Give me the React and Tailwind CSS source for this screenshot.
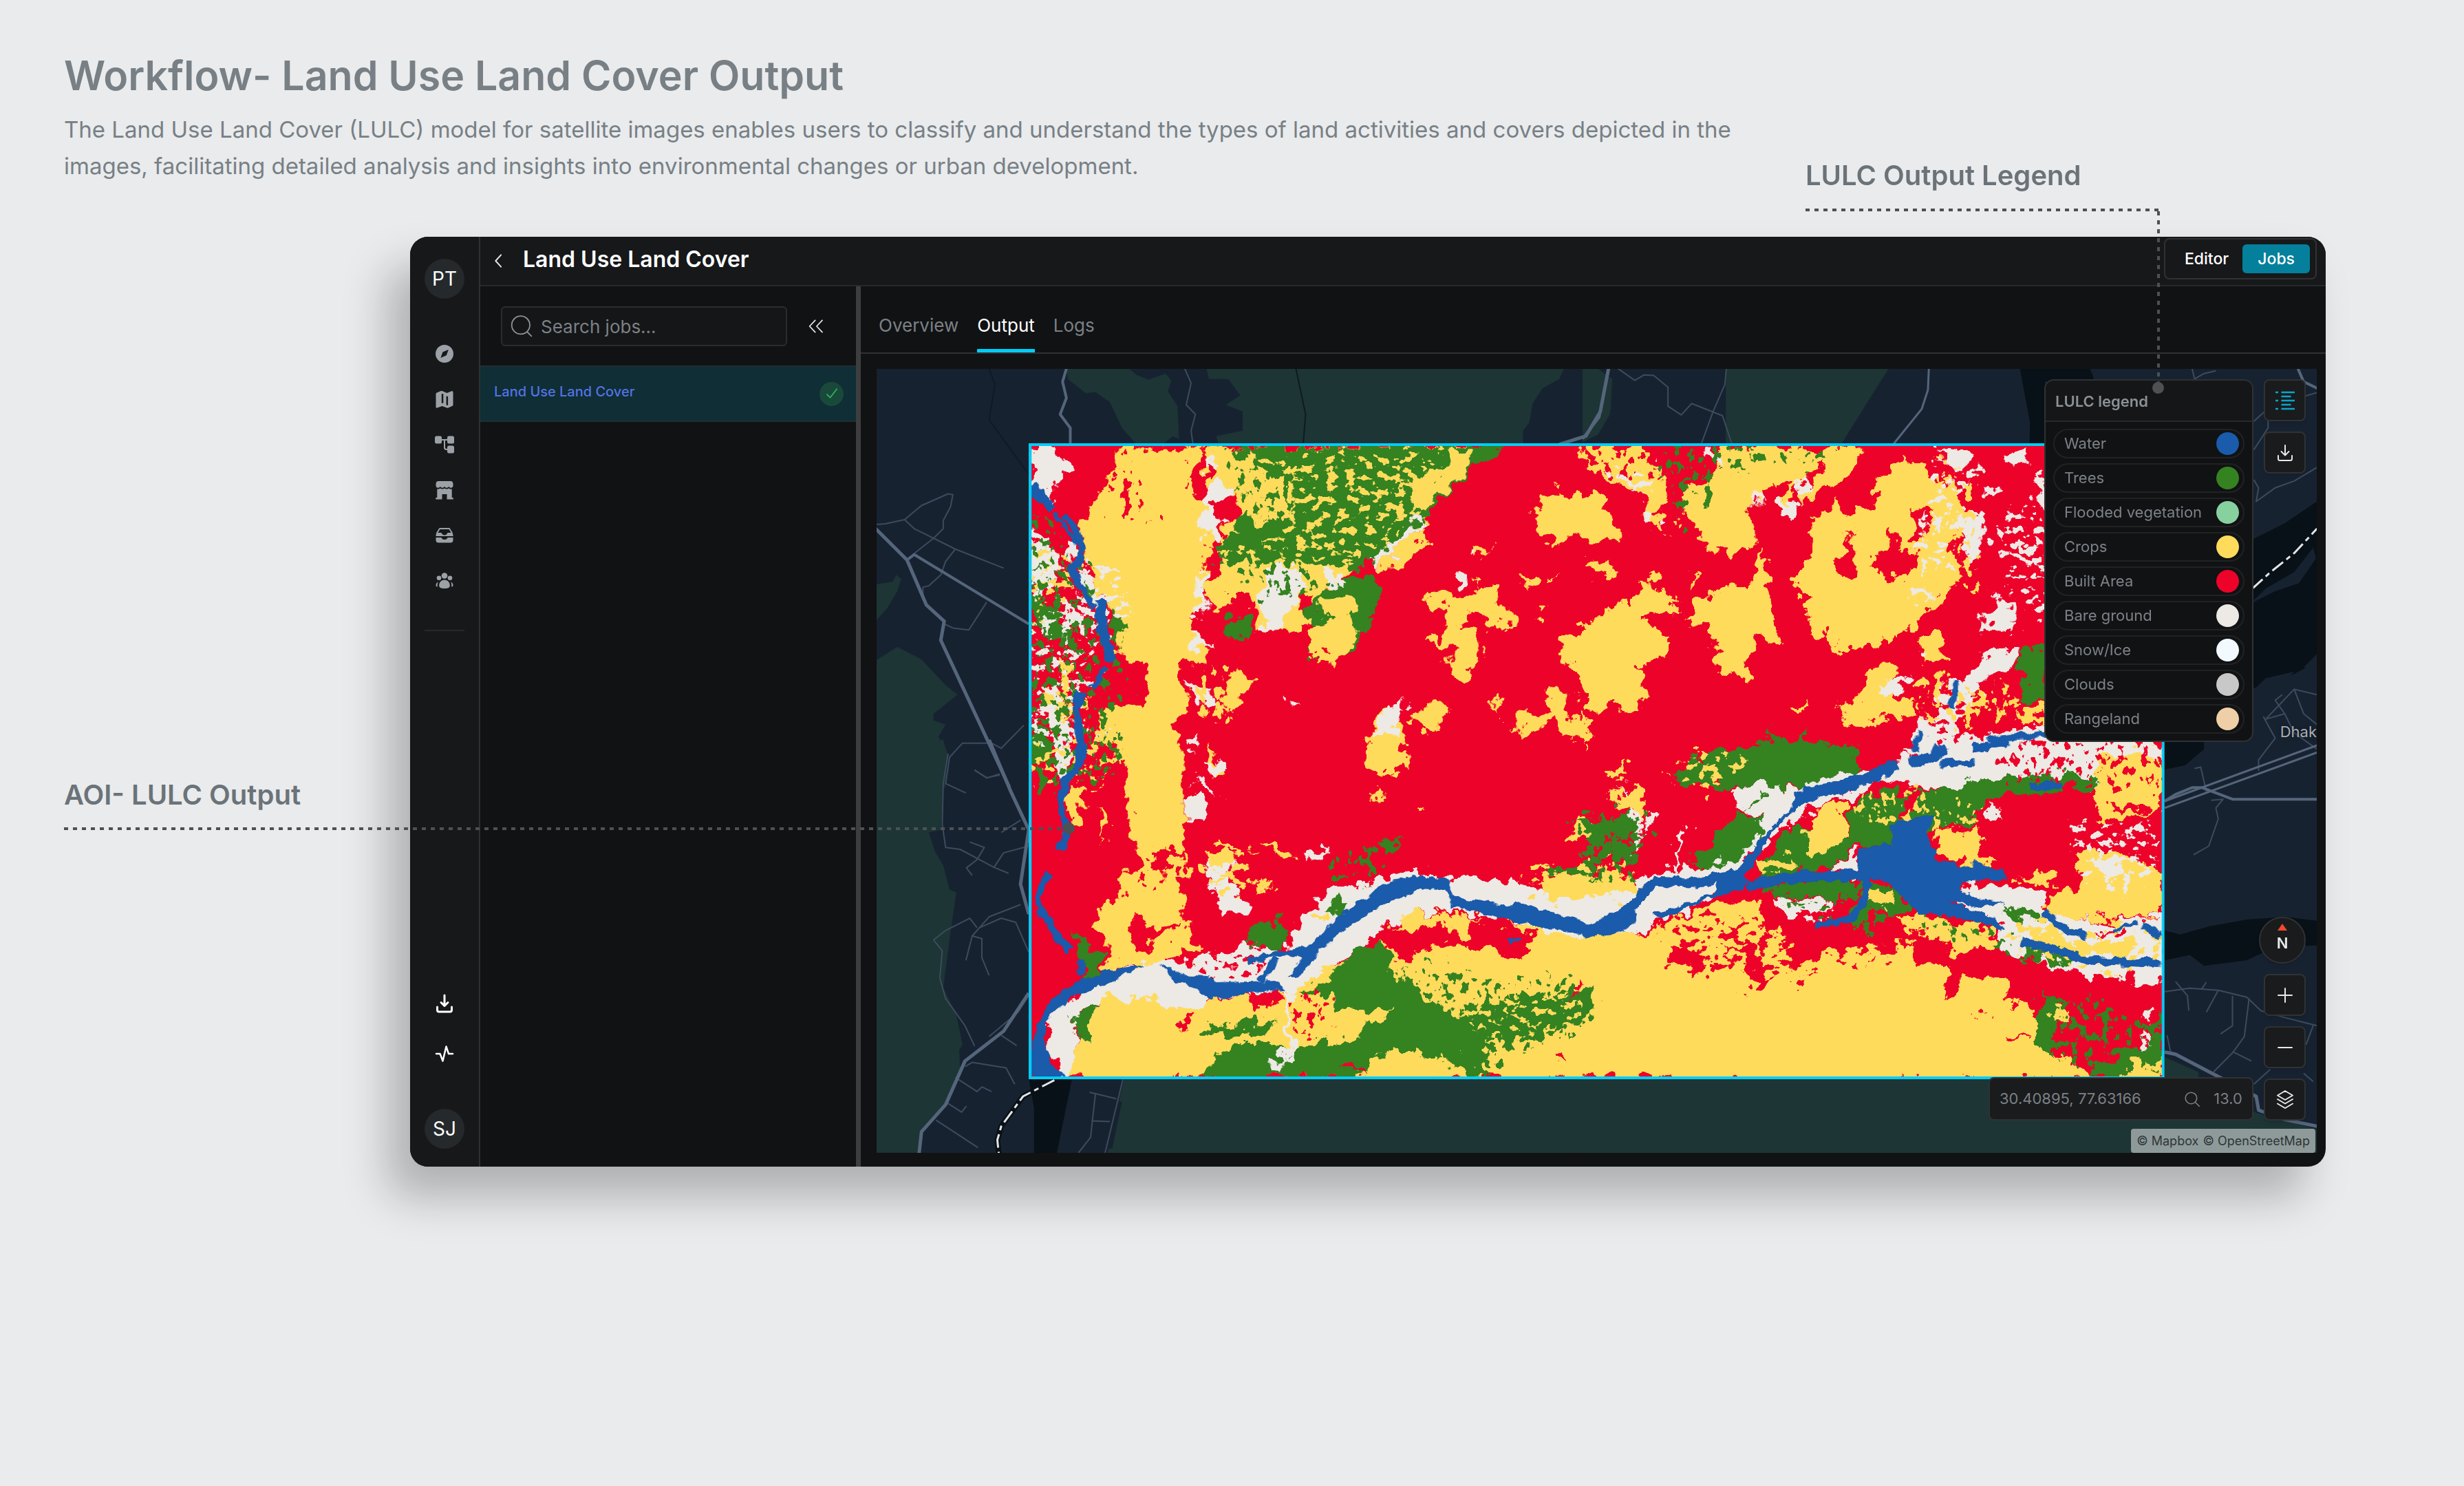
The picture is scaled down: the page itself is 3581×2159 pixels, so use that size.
import React from "react";

const C = {
  water: "#1a5bab",
  trees: "#358221",
  flooded: "#87d19e",
  crops: "#ffdb5c",
  built: "#ed022a",
  bare: "#ede9e4",
  snow: "#f2faff",
  clouds: "#c8c8c8",
  range: "#efcfa8",
};

const LEGEND = [
  ["Water", C.water],
  ["Trees", C.trees],
  ["Flooded vegetation", C.flooded],
  ["Crops", C.crops],
  ["Built Area", C.built],
  ["Bare ground", C.bare],
  ["Snow/Ice", C.snow],
  ["Clouds", C.clouds],
  ["Rangeland", C.range],
];

/* The map is split in four survey tiles; each has its own local grid. */
const TILE = {
  nw: "translate(1270 520) scale(0.7015 0.3954)",
  ne: "translate(2300 520) scale(0.6888 0.3954)",
  sw: "translate(1270 1080) scale(0.7015 0.3954)",
  se: "translate(2300 1080) scale(0.6888 0.3954)",
};

/* Solid land-cover areas, painted in order: tile, class, outline. */
const AREAS = [
  ["nw", "crops", "515,320 690,320 655,450 690,520 700,700 690,760 675,850 670,930 655,1000 690,1060 685,1120 640,1130 645,1250 635,1330 635,1580 525,1580 515,1480 500,1430 460,1400 470,1310 520,1285 570,1270 580,1170 540,1120 505,1080 505,1000 480,880 440,780 428,640 450,540 475,480 490,400"],
  ["sw", "crops", "515,0 635,0 640,200 645,300 645,395 570,400 590,460 640,400 665,470 630,510 640,560 645,660 680,770 600,790 560,825 485,830 480,720 450,660 500,590 515,520 548,440 530,330"],
  ["nw", "crops", "690,320 1240,320 1240,500 1100,650 990,770 940,850 900,1000 850,1010 800,1000 800,900 700,920 680,850 720,750 730,600 740,500 690,480"],
  ["nw", "trees", "750,320 1330,325 1240,440 1150,570 1110,650 1030,770 870,755 720,750 710,700 760,640 750,590 860,600 870,470 860,430 800,420 760,380"],
  ["nw", "crops", "1195,335 1240,345 1230,410 1180,500 1115,580 1110,450 1190,400"],
  ["nw", "built", "1320,325 1465,325 1520,440 1580,520 1580,900 1050,880 1030,800 990,775 1100,760 1150,570 1230,430"],
  ["nw", "trees", "985,800 1040,820 1052,880 1035,940 990,1080 950,1100 900,1100 895,1060 910,1000 900,920 940,850"],
  ["nw", "crops", "930,890 975,885 1000,940 995,1030 965,1110 910,1105 895,1060 910,1000 950,940 920,940"],
  ["nw", "trees", "735,960 775,930 780,1000 758,1035 735,1000"],
  ["nw", "built", "700,540 750,515 755,590 720,610"],
  ["nw", "built", "740,870 775,870 780,920 740,950"],
  ["nw", "built", "880,870 910,875 905,930 880,930"],
  ["nw", "bare", "820,780 870,760 900,830 870,880 850,990 815,1010 810,920 800,870"],
  ["nw", "bare", "925,770 960,790 980,840 930,830"],
  ["nw", "bare", "690,370 710,370 705,420 690,420"],
  ["nw", "bare", "685,500 720,460 745,480 740,510 690,540 725,610 710,670 680,640"],
  ["nw", "bare", "675,790 690,800 680,910 690,940 665,940"],
  ["nw", "bare", "655,1000 680,1040 710,1080 655,1060"],
  ["nw", "crops", "1415,480 1510,530 1550,640 1545,685 1490,670 1450,645 1415,690 1375,650 1365,590 1390,510"],
  ["nw", "crops", "1145,850 1230,880 1255,820 1315,900 1330,1005 1285,990 1235,930 1220,1000 1250,1020 1255,1155 1200,1175 1190,1110 1215,1070 1150,1060 1190,980 1180,920 1145,910"],
  ["nw", "crops", "1535,890 1590,930 1590,1280 1480,1290 1465,1170 1420,1080 1425,1015 1490,1010 1490,970 1520,960"],
  ["nw", "crops", "1400,1210 1445,1235 1440,1300 1485,1370 1475,1430 1420,1360 1400,1335 1350,1410 1325,1370 1345,1300 1400,1300"],
  ["nw", "crops", "1150,1230 1185,1290 1170,1370 1130,1380 1105,1340 1145,1310"],
  ["nw", "crops", "1040,1330 1090,1280 1090,1400 1110,1490 1080,1530 1040,1530 1020,1450"],
  ["nw", "crops", "750,1130 775,1180 765,1300 715,1310 735,1200"],
  ["nw", "crops", "695,1420 740,1540 710,1540 690,1460"],
  ["nw", "crops", "1480,760 1530,740 1530,810 1490,810"],
  ["nw", "crops", "1350,800 1380,820 1362,860"],
  ["nw", "crops", "1245,700 1278,688 1258,740"],
  ["nw", "crops", "1288,1260 1298,1250 1298,1310 1286,1310"],
  ["nw", "crops", "1370,940 1395,940 1385,970"],
  ["nw", "crops", "1400,798 1416,800 1410,825"],
  ["nw", "crops", "1140,610 1148,680 1095,760 1040,772 1090,695"],
  ["nw", "bare", "1130,585 1143,600 1100,680 1040,772 1030,770 1075,690"],
  ["nw", "bare", "655,1190 700,1230 720,1290 670,1270"],
  ["nw", "bare", "1212,760 1242,800 1215,840"],
  ["nw", "bare", "1242,710 1258,715 1245,745"],
  ["nw", "bare", "852,1240 885,1285 855,1290"],
  ["nw", "bare", "1090,1260 1105,1290 1075,1340 1080,1390 1035,1390 1040,1360"],
  ["nw", "bare", "650,1400 675,1380 670,1420 652,1440"],
  ["nw", "bare", "700,1470 735,1500 710,1540"],
  ["nw", "built", "395,325 470,335 480,480 440,600 400,580 372,520 380,440 405,420 380,370"],
  ["nw", "bare", "330,330 380,340 405,420 370,450 376,540 330,470"],
  ["nw", "bare", "326,620 370,690 395,800 350,900 326,900"],
  ["nw", "bare", "400,670 430,700 420,760 395,730"],
  ["nw", "bare", "415,780 445,790 475,900 460,960 440,880"],
  ["nw", "bare", "400,930 440,940 435,1010 410,990"],
  ["nw", "crops", "440,740 480,760 520,900 500,960 460,850"],
  ["nw", "trees", "326,860 370,900 400,980 410,1060 380,1040 326,970"],
  ["nw", "trees", "490,920 515,950 505,1050 490,1040"],
  ["nw", "bare", "345,1280 400,1310 410,1420 405,1560 375,1560 385,1400 350,1330"],
  ["nw", "crops", "345,1240 400,1240 410,1330 360,1290"],
  ["nw", "trees", "326,1340 360,1370 370,1480 326,1500"],
  ["nw", "crops", "390,1110 412,1140 410,1220 390,1240"],
  ["sw", "bare", "380,0 405,0 400,120 375,100"],
  ["sw", "crops", "400,170 435,190 430,290 405,310"],
  ["sw", "crops", "470,230 495,300 475,350"],
  ["ne", "crops", "0,325 125,330 130,390 175,450 180,530 160,560 180,650 150,640 120,580 130,540 70,440 0,400"],
  ["ne", "crops", "0,515 40,520 80,640 80,685 0,655"],
  ["ne", "crops", "280,325 590,335 570,430 500,490 430,580 410,540 450,460 400,455 360,560 365,690 270,720 250,640 210,610 215,520 240,460 280,440"],
  ["ne", "crops", "680,370 740,430 790,480 800,600 780,700 800,800 750,900 700,960 690,1030 620,1050 580,1080 520,1060 470,960 470,870 435,800 490,740 470,620 540,520 560,580 610,570 620,450 650,410"],
  ["ne", "built", "700,560 735,560 720,670 700,670"],
  ["ne", "built", "655,610 670,700 710,720 715,790 650,815 605,790 610,740 635,720"],
  ["ne", "built", "560,640 575,690 575,790 550,820 530,760 560,700"],
  ["ne", "built", "490,400 510,400 440,580 420,570"],
  ["ne", "crops", "130,800 195,880 205,945 150,930 140,980 180,1020 180,1090 130,1130 85,1140 85,1280 30,1290 0,1230 0,980 40,970 50,920 100,920"],
  ["ne", "crops", "375,710 400,820 380,900 420,1000 410,1060 365,1010 350,1180 280,1170 275,1010 215,970 240,890 350,840"],
  ["ne", "crops", "0,1290 15,1340 12,1420 0,1440"],
  ["ne", "crops", "600,1150 650,1110 665,1160 640,1230 700,1270 720,1310 560,1350 530,1280 590,1270"],
  ["ne", "crops", "710,1030 760,1020 770,1120 720,1130 705,1080"],
  ["ne", "crops", "10,750 60,745 65,800 15,790"],
  ["ne", "crops", "435,1285 480,1285 470,1300 435,1300"],
  ["ne", "crops", "225,790 240,800 235,840"],
  ["ne", "bare", "265,335 290,340 290,380 270,370"],
  ["ne", "bare", "365,490 380,500 370,550"],
  ["ne", "bare", "415,520 450,540 435,590 415,560"],
  ["ne", "bare", "450,450 480,480 470,510"],
  ["ne", "bare", "745,330 825,340 820,390 780,420 775,370"],
  ["ne", "bare", "890,340 935,340 930,390 900,400"],
  ["ne", "bare", "845,480 870,460 885,500 850,500"],
  ["ne", "bare", "790,580 820,550 855,610 835,750 800,740"],
  ["ne", "bare", "740,580 765,600 760,640 745,640"],
  ["ne", "bare", "870,880 905,900 905,990 840,1020 850,960"],
  ["ne", "bare", "920,680 965,700 960,740 925,720"],
  ["ne", "bare", "885,1065 920,1080 910,1140 850,1180 830,1270 800,1320 785,1440 740,1490 690,1470 700,1380 740,1290 760,1190 790,1200 850,1100"],
  ["ne", "bare", "958,430 975,430 980,600 960,540"],
  ["ne", "bare", "625,1200 690,1180 660,1240 630,1240"],
  ["ne", "bare", "700,1060 725,1070 720,1100 702,1100"],
  ["ne", "trees", "920,1090 985,1060 985,1280 930,1260"],
  ["ne", "crops", "890,1270 985,1290 985,1350 920,1330"],
  ["ne", "crops", "830,1240 870,1250 850,1300 800,1310"],
  ["ne", "bare", "780,1400 860,1385 985,1345 1235,1400 1235,1580 640,1580 690,1490"],
  ["ne", "trees", "320,1440 385,1440 395,1370 410,1430 455,1430 465,1350 480,1430 575,1440 580,1520 550,1580 190,1570 240,1500"],
  ["se", "trees", "240,50 330,20 400,0 560,0 580,60 570,110 500,155 440,160 300,135 190,140"],
  ["se", "bare", "640,90 860,0 1230,0 1220,60 1080,100 1050,130 1000,150 900,160 700,155 640,140 600,150 560,210 470,250 440,290 380,370 340,440 310,530 180,650 110,700 0,700 0,580 100,540 180,470 240,470 330,420 380,270 320,250 320,170 380,140 440,170 560,110"],
  ["se", "built", "600,160 690,150 720,175 600,190 540,310 540,260"],
  ["se", "trees", "320,270 378,270 370,350 330,420 250,475 220,430 270,370"],
  ["se", "trees", "600,190 700,180 860,130 1080,110 1085,150 1000,240 900,190 830,230 850,320 780,300 740,330 640,400 580,380 500,460 360,500 420,370 440,300 560,330 570,240"],
  ["se", "built", "675,195 700,190 695,270 675,260"],
  ["se", "crops", "500,240 560,230 560,320 520,400 470,405 480,290"],
  ["se", "crops", "370,430 440,420 450,460 380,470"],
  ["se", "bare", "520,440 575,400 580,480 510,475"],
  ["se", "trees", "340,250 375,190 380,215 345,225"],
  ["se", "built", "830,230 900,200 1080,160 1100,300 1180,280 1210,350 1180,440 1050,370 1030,430 1050,540 960,560 880,490 840,400"],
  ["se", "crops", "1090,70 1180,25 1230,40 1230,240 1100,300 1080,200"],
  ["se", "built", "1120,230 1200,240 1180,260 1120,250"],
  ["se", "crops", "745,330 830,330 840,400 865,470 800,450 745,390"],
  ["se", "crops", "980,560 1050,530 1040,400 1100,380 1180,440 1230,480 1230,630 1100,650 1000,640"],
  ["se", "crops", "920,480 1005,480 990,530 920,510"],
  ["se", "bare", "1080,430 1150,430 1130,500 1090,490"],
  ["se", "bare", "845,230 880,250 880,290 850,270"],
  ["se", "crops", "0,480 50,460 80,510 0,560"],
  ["se", "crops", "60,190 100,190 105,260 60,240"],
  ["se", "crops", "60,90 95,80 85,120 65,120"],
  ["se", "bare", "85,150 105,200 125,270 120,410 105,350 110,260"],
  ["se", "bare", "130,240 155,280 130,320"],
  ["se", "bare", "215,300 235,310 205,370 190,470 180,470 200,350"],
  ["se", "trees", "40,390 80,360 110,420 60,430"],
  ["se", "trees", "0,310 60,290 60,360 0,370"],
  ["se", "crops", "0,725 60,715 180,680 200,640 360,565 385,620 400,690 430,740 500,790 600,730 700,740 770,840 830,840 890,870 900,960 960,960 960,1100 1060,1200 1080,1240 0,1240"],
  ["se", "built", "180,750 270,780 260,850 185,810"],
  ["se", "built", "365,740 385,830 380,890 365,890 355,790 300,770"],
  ["se", "built", "430,640 590,650 600,720 540,750 500,790 415,830 440,760 400,690"],
  ["se", "built", "620,690 660,640 665,740 615,770"],
  ["se", "trees", "380,520 480,500 590,505 570,570 400,560"],
  ["se", "bare", "400,570 520,570 530,630 420,650"],
  ["se", "trees", "560,650 600,510 660,520 690,600 640,640 610,710"],
  ["se", "crops", "610,550 655,545 650,600 610,590"],
  ["se", "crops", "660,640 720,640 870,690 870,775 790,770 700,710"],
  ["se", "built", "700,700 760,720 780,770 870,760 920,800 1110,870 1220,880 1230,1090 1100,1180 980,1120 1000,1040 900,945 890,850 800,870 800,920 770,920 770,820 710,810"],
  ["se", "bare", "780,570 830,510 960,550 990,630 1110,660 1230,630 1230,890 1080,850 1020,840 930,790 870,760 880,680"],
  ["se", "crops", "950,680 1040,720 1110,750 1060,790 930,720"],
  ["se", "trees", "940,740 1040,770 1040,820 930,800"],
  ["se", "trees", "890,600 960,620 970,650 900,640"],
  ["se", "crops", "1080,730 1170,740 1160,780 1080,770"],
  ["se", "built", "1080,700 1140,680 1150,700 1080,710"],
  ["se", "trees", "960,935 1025,940 1000,1010 985,1110 1010,1170 960,1110"],
  ["se", "trees", "1080,1180 1200,1090 1230,1050 1230,1180 1150,1180 1140,1240 1075,1240"],
  ["se", "trees", "1030,1010 1060,1060 1050,1090 1030,1070"],
  ["se", "crops", "990,980 1020,970 1025,1010 990,1010"],
  ["se", "crops", "1150,1180 1230,1170 1230,1240 1140,1240"],
  ["se", "bare", "1175,1070 1200,1100 1185,1120"],
  ["se", "bare", "1185,1000 1200,970 1200,1040"],
  ["se", "built", "835,970 845,1020 830,1010"],
  ["se", "built", "890,1050 940,1090 900,1080"],
  ["sw", "crops", "410,1240 450,1000 470,930 580,920 640,990 690,950 850,920 880,860 1060,740 1080,625 1230,640 1400,680 1480,700 1590,700 1590,1240"],
  ["sw", "built", "1060,690 1280,645 1370,700 1340,770 1170,740 1100,810 1060,760"],
  ["sw", "crops", "1195,640 1240,640 1230,720 1200,710"],
  ["sw", "bare", "350,1100 365,980 440,900 560,812 600,790 650,825 690,780 760,755 865,755 875,670 940,540 1050,505 1100,480 1190,495 1300,505 1400,550 1580,540 1580,660 1490,720 1390,690 1300,645 1200,625 1080,635 1050,700 985,775 920,850 870,915 700,940 680,965 640,990 590,940 480,935 420,990 412,1060 430,1110 415,1240 380,1240"],
  ["sw", "crops", "1370,500 1580,480 1580,550 1400,580"],
  ["sw", "trees", "885,920 950,860 1000,745 1050,750 1090,860 1150,950 1210,1000 1300,940 1490,900 1505,960 1440,1050 1380,1090 1280,1120 1260,1240 1200,1180 1120,1130 1030,1150 1000,1240 680,1240 690,1170 760,1110 870,1110 1000,1090 1020,1030 1080,990 960,980 940,930"],
  ["sw", "crops", "1030,1150 1100,1130 1210,1160 1200,1215 1030,1215"],
  ["sw", "trees", "675,1045 830,1020 830,1060 680,1075"],
  ["sw", "trees", "765,750 790,670 855,640 860,720 830,755"],
  ["sw", "trees", "415,1000 460,950 455,1060 430,1105 415,1060"],
  ["sw", "trees", "940,590 990,590 960,640"],
  ["sw", "crops", "910,620 950,615 945,650 910,650"],
  ["sw", "trees", "410,690 470,770 480,860 435,870 430,790"],
  ["sw", "trees", "1050,360 1090,365 1070,385 1045,380"],
  ["sw", "trees", "1020,420 1045,450 1040,500 1020,480"],
  ["sw", "bare", "845,890 865,930 877,1110 840,1160 842,1220 828,1220 830,1160 862,1090 855,940"],
  ["sw", "bare", "690,420 750,390 745,500 770,600 720,640 710,540 690,520"],
  ["sw", "crops", "700,400 755,395 750,450 700,460"],
  ["sw", "crops", "800,370 870,390 880,440 850,450 830,400 800,390"],
  ["sw", "crops", "800,490 825,540 800,570 790,520"],
  ["sw", "bare", "890,400 935,400 920,440 895,430"],
  ["sw", "crops", "1035,190 1050,150 1065,220 1045,225"],
  ["sw", "crops", "1110,250 1150,220 1125,270"],
  ["sw", "crops", "1020,30 1050,-20 1110,60 1085,110 1030,100"],
  ["sw", "crops", "1520,200 1590,160 1590,270"],
  ["sw", "crops", "1535,90 1560,80 1550,140 1530,120"],
  ["sw", "bare", "640,200 685,200 690,285 645,275"],
  ["sw", "bare", "660,150 690,145 720,200 690,170"],
  ["sw", "bare", "685,70 720,60 735,110 700,110"],
  ["sw", "crops", "1440,330 1475,260 1500,330 1440,370"],
  ["sw", "trees", "1460,290 1580,270 1580,330 1480,360"],
  ["sw", "trees", "1530,370 1580,370 1580,440 1540,420"],
  ["sw", "trees", "1390,450 1480,450 1490,500 1400,480"],
  ["sw", "built", "525,700 545,640 580,680 640,660 560,770"],
  ["sw", "built", "570,400 640,400 600,470"],
  ["sw", "built", "780,910 850,930 790,1010"],
  ["sw", "built", "1440,880 1465,880 1445,970"],
  ["sw", "built", "625,1030 660,1010 640,1060"],
  ["sw", "built", "960,1190 990,1170 1020,1210"],
  ["sw", "built", "1405,1150 1430,1130 1435,1170"],
];

/* Areas where two classes mix cell by cell. */
const MIXED = [
  ["nw", "crops", "760,380 1110,340 1200,400 1120,620 1000,740 720,760 720,680 870,620"],
  ["nw", "trees", "740,340 880,360 870,620 740,640 700,760 820,880 960,840 900,760 760,600"],
  ["nw", "crops", "326,700 420,720 440,1100 470,1300 440,1560 326,1560"],
  ["nw", "trees", "326,560 360,600 440,760 440,960 520,980 500,1500 410,1560 326,1500"],
  ["nw", "bare", "430,740 520,780 540,900 470,1050 440,1300 500,1400 470,1560 326,1560 326,1000 400,900"],
  ["nw", "built", "480,340 530,400 560,600 600,640 590,600 520,600 480,500"],
  ["nw", "built", "650,360 690,380 690,520 650,480"],
  ["nw", "crops", "660,1130 770,1130 750,1320 660,1300"],
  ["ne", "bare", "60,400 160,400 160,640 120,580"],
  ["ne", "built", "0,330 290,330 280,460 180,460 0,420"],
  ["ne", "bare", "740,340 820,420 800,620 740,900 700,900"],
  ["ne", "trees", "190,330 540,330 520,400 290,400 200,620 190,520"],
  ["ne", "bare", "880,560 980,560 980,1000 880,860"],
  ["ne", "crops", "740,380 820,420 820,860 760,860"],
  ["ne", "built", "720,1240 980,1240 980,1360 740,1400"],
  ["ne", "crops", "690,1200 900,1220 880,1340 700,1340"],
  ["ne", "crops", "200,1450 340,1430 320,1568 190,1568"],
  ["ne", "built", "900,1440 1220,1400 1220,1568 960,1568"],
  ["se", "crops", "200,60 320,20 260,180 220,200"],
  ["se", "built", "870,50 1200,0 1100,120 900,150"],
  ["se", "trees", "0,260 140,280 100,440 0,480"],
  ["se", "crops", "560,180 740,160 760,280 600,300"],
  ["se", "trees", "390,520 570,500 560,640 400,600"],
  ["se", "crops", "740,240 840,240 840,320 740,320"],
  ["se", "built", "200,640 680,640 720,760 520,840 380,900 180,820"],
  ["se", "trees", "700,620 880,660 940,800 860,740 720,680"],
  ["se", "crops", "900,620 1220,680 1220,840 1040,820 920,760"],
  ["se", "trees", "960,940 1080,960 1220,1000 1220,1220 1060,1200 960,1100"],
  ["se", "bare", "1030,300 1220,300 1200,540 1060,520"],
  ["sw", "trees", "326,0 520,0 500,140 326,160"],
  ["sw", "crops", "326,0 500,0 480,160 326,130"],
  ["sw", "built", "560,420 660,400 640,500 560,500"],
  ["sw", "built", "680,760 860,760 800,830 640,850"],
  ["sw", "trees", "1080,820 1460,860 1480,1020 1260,1220 1100,1140"],
  ["sw", "crops", "1240,900 1480,900 1460,1040 1340,1200 1260,1160"],
  ["sw", "built", "880,900 960,960 920,1080 860,1060"],
  ["sw", "crops", "1340,440 1568,440 1568,540 1340,560"],
  ["sw", "trees", "1440,280 1568,260 1568,480 1480,480"],
  ["sw", "crops", "680,380 800,380 760,560 680,540"],
  ["sw", "trees", "930,440 1060,360 1040,500 960,500"],
];

const WATER_AREAS = [
  ["sw", "322,1232 400,1232 365,1170 355,1090 365,1000 410,935 480,890 560,820 490,835 420,880 370,940 340,1040 326,1130"],
  ["sw", "595,812 640,850 695,855 705,880 840,875 850,910 770,920 755,935 690,945 670,900 625,880"],
  ["sw", "770,800 840,765 895,755 950,660 1000,590 1060,520 1120,486 1190,505 1200,560 1300,595 1340,590 1420,630 1490,670 1525,625 1580,590 1580,660 1530,710 1490,708 1380,680 1200,605 1185,540 1140,535 1050,600 980,680 920,770 880,870 860,865 885,785 830,785 780,815"],
  ["se", "650,300 740,260 725,330 750,430 800,450 860,475 890,470 880,495 800,510 790,545 850,580 890,590 840,605 770,580 810,605 870,640 890,690 780,635 710,630 670,560 640,510 580,490 580,390 650,370"],
  ["se", "450,175 500,170 510,190 450,240 400,330 360,450 345,490 340,540 290,560 160,650 150,630 270,560 290,490 330,460 360,380 440,240"],
  ["ne", "850,1395 985,1370 985,1395 880,1412 860,1430"],
  ["sw", "1310,715 1345,715 1340,735 1315,735"],
];

/* tile, stroke width, course */
const STREAMS = [
  ["nw", 14, "326,465 350,520 372,560"],
  ["nw", 6, "378,575 405,650 425,690"],
  ["nw", 10, "395,575 420,640 432,700 428,750 410,780 432,850 455,920"],
  ["nw", 14, "472,890 472,1000 490,1070 490,1120"],
  ["nw", 8, "478,1140 465,1190 450,1215"],
  ["nw", 12, "432,1230 420,1290 425,1370 434,1450 420,1510 395,1568"],
  ["sw", 11, "430,-10 424,80 398,150 388,200 392,260 402,320 385,400"],
  ["sw", 10, "362,480 345,540 340,600"],
  ["sw", 11, "340,600 365,660 385,720 408,760"],
  ["sw", 8, "432,795 428,860"],
  ["sw", 9, "835,790 815,840 800,875"],
  ["ne", 9, "790,1190 785,1240 775,1290"],
  ["ne", 16, "765,1430 740,1470 690,1490"],
  ["ne", 8, "712,1370 700,1450"],
  ["se", 15, "755,10 740,55 690,70"],
  ["se", 18, "665,80 600,130 540,165 470,185"],
  ["se", 10, "820,20 900,0"],
  ["se", 10, "755,78 825,72"],
  ["se", 10, "945,165 1010,155"],
  ["se", 14, "320,480 240,515 150,510 110,590 60,680 0,705"],
  ["se", 16, "345,530 420,500 500,490 600,490"],
  ["se", 10, "600,510 592,590 560,650 490,675"],
  ["se", 12, "970,620 1010,680 1060,712"],
  ["se", 12, "925,730 1000,760 1060,800 1220,812"],
  ["se", 6, "1120,690 1170,660"],
  ["se", 10, "1180,670 1220,715"],
  ["se", 16, "820,450 860,485 890,480"],
];

const LAND = [
  ["nw", "400,42 530,42 545,65 570,82 605,60 617,85 610,125 630,180 633,300 620,290 600,320 545,320 515,260 490,165 460,128 440,132 403,80"],
  ["nw", "690,42 1430,42 1420,80 1385,115 1365,170 1358,240 1345,270 1345,320 715,320 710,290 765,270 765,200 730,175 760,140 735,80 695,80"],
  ["nw", "1500,42 1530,80 1525,210 1500,285 1470,310 1495,180"],
  ["nw", "5,835 40,825 48,800 58,815 50,860 30,920 5,970"],
  ["nw", "5,1115 50,1065 100,1110 150,1205 175,1240 125,1310 125,1335 150,1350 135,1395 153,1450 150,1580 5,1580"],
  ["sw", "5,-10 145,-10 155,50 145,150 140,320 115,330 128,400 145,450 158,540 172,550 160,700 145,900 172,1000 185,1110 178,1130 180,1200 150,1330 100,1430 95,1507 5,1507"],
  ["sw", "435,1230 1590,1230 1590,1510 485,1510 520,1230"],
  ["ne", "302,42 645,42 545,320 302,320"],
  ["ne", "0,42 30,42 60,80 60,190 30,280 0,315"],
  ["se", "-20,1230 1227,1230 1227,1155 1298,1210 1298,1240 1420,1360 1548,1420 1548,1510 -20,1510"],
];

const NAVY = [["sw", "415,1230 450,1290 515,1320 495,1490 425,1510 380,1510"]];

const DEEP = [
  ["sw", "322,1230 412,1230 380,1510 333,1510 333,1345"],
  ["ne", "922,42 1070,42 1080,90 975,90 975,320 942,320 943,240"],
  ["ne", "1400,680 1480,610 1548,530 1548,1120 1460,1200 1400,1220"],
  ["ne", "1227,1410 1310,1410 1310,1440 1270,1500 1227,1515"],
  ["se", "1227,690 1260,705 1320,675 1400,650 1480,640 1550,655 1550,745 1460,750 1400,800 1310,820 1280,780 1227,800"],
];

const ISLANDS = [
  ["ne", "1405,910 1440,850 1500,790 1540,700 1546,740 1510,830 1460,860 1425,890"],
  ["ne", "1410,1230 1440,1180 1500,1155 1480,1200 1430,1240"],
  ["ne", "1520,1140 1548,1090 1548,1150"],
];

const MAJOR = [
  ["nw", 5, "5,630 70,745 110,910 147,970 140,1040 240,1420 282,1580"],
  ["nw", 4, "70,745 85,725 322,980"],
  ["nw", 4, "400,42 392,90 400,150 387,210 408,260 408,320"],
  ["nw", 5, "1522,42 1505,200 1475,290 1420,320"],
  ["sw", 5, "240,-10 285,180 322,320 305,520 322,630"],
  ["sw", 5, "322,920 270,1060 190,1170 150,1330 100,1430 95,1510"],
  ["ne", 3, "730,42 728,120 715,190 655,320"],
  ["ne", 4, "1508,42 1520,90 1550,115"],
  ["ne", 4, "55,42 35,220 0,300"],
  ["se", 4, "1227,215 1250,190 1285,165 1305,165 1370,208 1550,208"],
  ["se", 3, "1227,240 1550,35"],
  ["se", 3, "1227,215 1548,10"],
  ["se", 5, "1227,1137 1250,1145 1420,1300 1425,1350 1480,1385 1550,1410"],
];

const MINOR = [
  ["nw", "645,42 658,95 648,175 667,210 658,270 662,320"],
  ["nw", "5,615 25,612 65,597 100,545 155,502 165,505 160,550 145,600 145,630 125,665 82,725"],
  ["nw", "65,597 85,630 170,705 270,775"],
  ["nw", "170,705 150,750 140,800 115,840 103,845 103,880"],
  ["nw", "235,900 198,1002 165,995 147,980"],
  ["nw", "312,1352 265,1437 245,1418 185,1418 158,1470 150,1568"],
  ["nw", "210,1518 235,1545 262,1535"],
  ["sw", "155,40 145,150 143,300 150,385 180,392 250,458 270,405 322,380"],
  ["sw", "200,365 230,385 215,430 193,460 205,488"],
  ["sw", "250,458 280,480"],
  ["sw", "265,330 305,285"],
  ["sw", "210,100 235,130 262,115"],
  ["sw", "150,150 192,185"],
  ["sw", "305,595 240,640 205,710 192,800"],
  ["sw", "205,710 225,720 225,790 240,855"],
  ["sw", "215,680 200,645 150,690 125,725 143,765 138,865 150,940 190,1040 210,1115"],
  ["sw", "220,680 265,645 295,660 322,770"],
  ["sw", "322,930 300,990 240,1080"],
  ["sw", "265,1075 297,1113"],
  ["sw", "190,1190 205,1175 275,1195 293,1255"],
  ["sw", "170,1230 215,1282 225,1265 245,1282"],
  ["sw", "150,1320 183,1358 193,1335"],
  ["sw", "130,1387 217,1488"],
  ["sw", "517,1236 480,1507"],
  ["sw", "448,1285 503,1308"],
  ["sw", "460,1290 450,1450 425,1507"],
  ["sw", "452,1390 490,1392"],
  ["ne", "75,42 110,85 130,65 150,67 180,110 180,180 208,212 230,170 295,215 315,320"],
  ["ne", "303,42 300,100 275,200 250,320"],
  ["ne", "1285,42 1290,80 1310,60 1335,50"],
  ["ne", "1415,235 1450,180 1548,130"],
  ["ne", "1415,340 1445,260 1445,230"],
  ["ne", "1415,450 1425,480 1420,530 1460,480 1500,455 1548,405"],
  ["ne", "1440,1330 1500,1220 1548,1240"],
  ["ne", "1435,1320 1460,1400 1425,1480 1425,1520"],
  ["ne", "1500,1220 1520,1310 1548,1350"],
  ["ne", "1440,1330 1480,1310 1500,1380 1548,1440"],
  ["ne", "1480,1310 1460,1260 1475,1240"],
  ["se", "1290,95 1303,90 1315,180"],
  ["se", "1325,212 1350,208 1335,240 1340,280 1320,380 1288,412"],
  ["se", "1227,915 1280,902 1340,910 1400,935 1430,985 1480,1010 1548,1040"],
  ["se", "1250,878 1275,930 1278,985"],
  ["se", "1305,905 1315,880"],
  ["se", "1340,910 1315,990"],
  ["se", "1370,930 1370,1040 1345,1070"],
  ["se", "1405,940 1395,1080 1370,1140 1330,1210"],
  ["se", "1370,1135 1410,1170"],
  ["se", "1232,1075 1240,1140"],
  ["se", "1415,1255 1450,1200"],
  ["se", "1520,1215 1540,1245"],
  ["se", "1540,1040 1525,1110"],
];

const BORDERS = [
  ["nw", "240,42 252,100 240,230 322,430"],
  ["nw", "875,42 895,210 890,320"],
];

const RAILS = [
  ["sw", "375,1240 310,1300 265,1410 257,1460 260,1510"],
  ["ne", "1412,850 1450,790 1500,720 1548,630"],
];

function Poly({ tile, points, fill }) {
  return <polygon transform={TILE[tile]} points={points} fill={fill} />;
}

function Line({ tile, points, stroke, width, dash }) {
  return (
    <polyline
      transform={TILE[tile]}
      points={points}
      fill="none"
      stroke={stroke}
      strokeWidth={width}
      strokeDasharray={dash}
      strokeLinejoin="round"
      vectorEffect="non-scaling-stroke"
    />
  );
}

function CoverMap() {
  return (
    <svg
      viewBox="1275 537 2091 1139"
      preserveAspectRatio="none"
      className="absolute inset-0 size-full"
      role="img"
      aria-label="Land cover map"
    >
      <defs>
        <clipPath id="aoi">
          <rect x="1498" y="648" width="1645" height="919" />
        </clipPath>
        <filter id="ragged" filterUnits="userSpaceOnUse" x="1440" y="600" width="1760" height="1020" colorInterpolationFilters="sRGB">
          <feTurbulence type="fractalNoise" baseFrequency="0.045" numOctaves="4" seed="4" />
          <feDisplacementMap in="SourceGraphic" scale="42" xChannelSelector="R" yChannelSelector="G" />
        </filter>
        <filter id="mixed" filterUnits="userSpaceOnUse" x="1440" y="600" width="1760" height="1020" colorInterpolationFilters="sRGB">
          <feTurbulence type="fractalNoise" baseFrequency="0.07 0.09" numOctaves="3" seed="11" result="n" />
          <feColorMatrix in="n" values="0 0 0 0 0  0 0 0 0 0  0 0 0 0 0  26 0 0 0 -14.6" result="m" />
          <feTurbulence type="fractalNoise" baseFrequency="0.03" numOctaves="3" seed="7" result="d" />
          <feDisplacementMap in="SourceGraphic" in2="d" scale="70" xChannelSelector="R" yChannelSelector="G" result="s" />
          <feComposite in="s" in2="m" operator="in" />
        </filter>
        <filter id="mixedAlt" filterUnits="userSpaceOnUse" x="1440" y="600" width="1760" height="1020" colorInterpolationFilters="sRGB">
          <feTurbulence type="fractalNoise" baseFrequency="0.09 0.07" numOctaves="3" seed="23" result="n" />
          <feColorMatrix in="n" values="0 0 0 0 0  0 0 0 0 0  0 0 0 0 0  0 26 0 0 -14.8" result="m" />
          <feTurbulence type="fractalNoise" baseFrequency="0.03" numOctaves="3" seed="9" result="d" />
          <feDisplacementMap in="SourceGraphic" in2="d" scale="70" xChannelSelector="R" yChannelSelector="G" result="s" />
          <feComposite in="s" in2="m" operator="in" />
        </filter>
        <filter id="banks" filterUnits="userSpaceOnUse" x="1440" y="600" width="1760" height="1020" colorInterpolationFilters="sRGB">
          <feTurbulence type="fractalNoise" baseFrequency="0.07" numOctaves="3" seed="2" />
          <feDisplacementMap in="SourceGraphic" scale="12" xChannelSelector="R" yChannelSelector="G" />
        </filter>
      </defs>

      <rect x="1275" y="537" width="2091" height="1139" fill="#172231" />
      {LAND.map(([t, p], i) => <Poly key={i} tile={t} points={p} fill="#1d3535" />)}
      {NAVY.map(([t, p], i) => <Poly key={i} tile={t} points={p} fill="#172231" />)}
      {DEEP.map(([t, p], i) => <Poly key={i} tile={t} points={p} fill="#081117" />)}
      {ISLANDS.map(([t, p], i) => <Poly key={i} tile={t} points={p} fill="#172231" />)}
      {BORDERS.map(([t, p], i) => <Line key={i} tile={t} points={p} stroke="#0e1b22" width={2} />)}
      {MINOR.map(([t, p], i) => <Line key={i} tile={t} points={p} stroke="#3c4b5d" width={2} />)}
      {MAJOR.map(([t, w, p], i) => <Line key={i} tile={t} points={p} stroke="#55657b" width={w} />)}
      {RAILS.map(([t, p], i) => <Line key={i} tile={t} points={p} stroke="#081117" width={8} />)}
      {RAILS.map(([t, p], i) => <Line key={i} tile={t} points={p} stroke="#e5e5e5" width={3} dash="20 6 7 6" />)}

      <g clipPath="url(#aoi)">
        <rect x="1496" y="645" width="1649" height="924" fill={C.built} />
        <g filter="url(#ragged)">
          {AREAS.map(([t, c, p], i) => <Poly key={i} tile={t} points={p} fill={C[c]} />)}
        </g>
        <g filter="url(#mixed)">
          {MIXED.filter((_, i) => i % 2 === 0).map(([t, c, p], i) => <Poly key={i} tile={t} points={p} fill={C[c]} />)}
        </g>
        <g filter="url(#mixedAlt)">
          {MIXED.filter((_, i) => i % 2 === 1).map(([t, c, p], i) => <Poly key={i} tile={t} points={p} fill={C[c]} />)}
        </g>
        <g filter="url(#banks)">
          {WATER_AREAS.map(([t, p], i) => <Poly key={i} tile={t} points={p} fill={C.water} />)}
          {STREAMS.map(([t, w, p], i) => <Line key={i} tile={t} points={p} stroke={C.water} width={w} />)}
        </g>
      </g>
      <rect x="1498" y="647" width="1645" height="920" fill="none" stroke="#00cdf7" strokeWidth="4" />
    </svg>
  );
}

function Icon({ children, className }) {
  return (
    <svg viewBox="0 0 28 28" className={className} fill="none" stroke="currentColor" strokeWidth="2" strokeLinecap="round" strokeLinejoin="round" aria-hidden="true">
      {children}
    </svg>
  );
}

const NAV = [
  ["Explore", <path key="a" fill="currentColor" stroke="none" fillRule="evenodd" d="M14 1a13 13 0 1 0 0 26 13 13 0 0 0 0-26Zm5.800 7-3 8.200L8.400 20l3-8.600L19.800 8Z" />],
  ["Maps", <path key="a" stroke="none" fill="currentColor" fillRule="evenodd" d="M1.500 6.500c0-1 .5-1.700 1.500-2.100L8.300 2.200c1-.4 1.900-.3 2.800.1L17.500 5l5.700-2.300c2-.8 3.300-.2 3.300 1.600V22c0 1-.6 1.700-1.500 2.100l-5.500 2.300c-1 .4-1.800.3-2.700-.1L10.500 24l-7 2.500c-1.200.5-2-.1-2-1.300Zm8.300-.3v13.500h2.500V6.200Zm6.800 3.600v13h2.500v-13Z" />],
  ["Workflows", <g key="a"><g fill="currentColor" stroke="none"><rect x="0" y="1.500" width="10" height="11" rx="2.500" /><rect x="18" y="1.500" width="10" height="11" rx="2.500" /><rect x="18" y="15.500" width="10" height="11" rx="2.500" /></g><path d="M9 7h10M14 7v11a3 3 0 0 0 3 3h2" /></g>],
  ["Store", <path key="a" fill="currentColor" stroke="none" d="M5.500 1h17c3 0 4 2 4 4.500v2c0 2-1.500 3.300-3.200 3.300-1.400 0-2.600-.8-3.100-2-.5 1.200-1.700 2-3.100 2s-2.600-.8-3.100-2c-.5 1.200-1.700 2-3.100 2s-2.600-.8-3.100-2c-.5 1.200-1.700 2-3.100 2-1.700 0-3.200-1.300-3.200-3.300v-2C1.500 3 2.500 1 5.500 1ZM3.300 12.500c1.800.4 3.300-.1 4.500-1 1.800 1.300 4.400 1.300 6.200 0 1.800 1.300 4.400 1.300 6.200 0 1.200.9 2.700 1.400 4.500 1V25h2v2.500h-9.200V20h-7v7.500H1.300V25h2Z" />],
  ["Inbox", <g key="a"><path d="M3 10.500 7 4h14l4 6.500" strokeWidth="1.800" /><path fill="currentColor" stroke="none" d="M1.500 14c0-2.500 1-4 3.500-4h3.500c1 0 1.300.5 1.700 1.300.6 1.200 1.600 2.200 3.800 2.200s3.200-1 3.800-2.200c.4-.8.700-1.300 1.700-1.300H23c2.500 0 3.500 1.500 3.500 4v1h-25ZM1.500 17h7c1 0 1.300.5 1.700 1.300.6 1.200 1.600 1.700 3.800 1.700s3.200-.5 3.800-1.700c.4-.8.700-1.300 1.700-1.300h7v3.500c0 3-1.500 4-4 4h-17c-2.500 0-4-1-4-4Z" /></g>],
  ["Team", <g key="a" fill="currentColor" stroke="none"><circle cx="14" cy="6.500" r="4.300" /><circle cx="6" cy="9.800" r="3.300" /><circle cx="22" cy="9.800" r="3.300" /><path d="M14 12.500c-5 0-7.800 4-7.800 8 0 3 2 4.500 7.800 4.500s7.800-1.500 7.800-4.500c0-4-2.800-8-7.800-8ZM4.700 15.500c-2 .6-3.200 2.800-3.200 5 0 1.200.8 2 2.400 2-.4-2.500-.1-4.900.8-7ZM23.300 15.500c2 .6 3.200 2.800 3.200 5 0 1.200-.8 2-2.400 2 .4-2.500.1-4.900-.8-7Z" /></g>],
];

function Sidebar() {
  return (
    <aside className="flex w-[102px] shrink-0 flex-col items-center border-r-2 border-[#2f3133] bg-[#17181a] pb-[26px] pt-8 text-[#9ba1a6]">
      <button className="size-[58px] rounded-full bg-[#25292b] text-[28px] text-white">PT</button>
      <nav className="mt-[66px] flex flex-col gap-[38px]">
        {NAV.map(([name, art]) => (
          <button key={name} aria-label={name} className="size-7">
            <Icon className="size-7">{art}</Icon>
          </button>
        ))}
      </nav>
      <hr className="mt-[57px] w-[58px] border-t-2 border-[#26282a]" />
      <button aria-label="Downloads" className="mt-auto text-white">
        <Icon className="size-7">
          <path d="M14 2v15M9 12.500l5 5 5-5M3.500 19v4.500c0 1.500.8 2.500 2.500 2.500h16c1.700 0 2.500-1 2.500-2.500V19" strokeWidth="3" />
        </Icon>
      </button>
      <button aria-label="Activity" className="mt-[45px] text-white">
        <Icon className="size-7">
          <path d="M2 14h5.500l4 10.500L16.500 3.500 20 14h6" strokeWidth="2.500" />
        </Icon>
      </button>
      <button className="mt-[66px] size-[58px] rounded-full bg-[#25292b] text-[28px] text-white">SJ</button>
    </aside>
  );
}

function Jobs() {
  return (
    <section className="w-[553px] shrink-0 border-r-[7px] border-[#3e3e3f]">
      <div className="flex items-center px-[30px] pb-7 pt-[29px]">
        <label className="flex h-[58px] w-[416px] items-center gap-3 rounded-md border-2 border-[#2a2c2e] bg-[#151618] px-3 text-[#8d9193]">
          <Icon className="size-8 shrink-0">
            <circle cx="13" cy="12.500" r="11.500" strokeWidth="1.600" />
            <path d="m21 21 5.500 5.500" strokeWidth="1.600" />
          </Icon>
          <input
            aria-label="Search jobs"
            placeholder="Search jobs..."
            className="w-full bg-transparent text-[26px] outline-none placeholder:text-[#7b8186]"
          />
        </label>
        <button aria-label="Collapse panel" className="ml-[30px] text-[#e6e8e9]">
          <Icon className="size-6">
            <path d="M12.500 4 3 14l9.500 10M24.500 4 15 14l9.500 10" />
          </Icon>
        </button>
      </div>
      <button className="flex h-[82px] w-full items-center justify-between border-y-2 border-[#202f32] bg-[#0f2e35] pl-5 pr-[18px] text-left">
        <span className="pb-1.5 text-[20px] font-medium leading-7 text-[#5472e4]">Land Use Land Cover</span>
        <span className="grid size-[35px] place-items-center rounded-full bg-[#19493a] text-[#30b053]">
          <Icon className="size-5">
            <path d="M4 15.500 10.500 22 24 4.500" strokeWidth="2.600" />
          </Icon>
        </span>
      </button>
    </section>
  );
}

function Legend() {
  return (
    <section className="w-[304px] overflow-hidden rounded-[14px] border-2 border-[#2f3132] bg-[#111214] text-[22px] text-[#7b8186]">
      <h2 className="border-b-2 border-[#27292b] bg-[#151618] pb-3.5 pl-3.5 pt-4 font-semibold leading-7 text-[#8a9094]">LULC legend</h2>
      <ul className="flex flex-col gap-[7px] px-[11px] py-[10px]">
        {LEGEND.map(([name, color]) => (
          <li key={name} className="flex h-[43px] items-center justify-between rounded-full border-2 border-[#202224] pl-3.5 pr-1.5">
            <span className="whitespace-nowrap">{name}</span>
            <span className="size-[33px] shrink-0 rounded-full" style={{ backgroundColor: color }} />
          </li>
        ))}
      </ul>
    </section>
  );
}

function MapButton({ label, className = "text-[#e6e8e9]", children }) {
  return (
    <button
      aria-label={label}
      className={`grid size-[61px] place-items-center rounded-lg border-2 border-[#303234] bg-[#1a1b1d] shadow-md ${className}`}
    >
      <Icon className="size-7">{children}</Icon>
    </button>
  );
}

function MapView() {
  return (
    <div className="relative mx-[13px] ml-[23px] mb-5 mt-[22px] aspect-[2093/1139] overflow-hidden">
      <CoverMap />
      <span className="absolute right-0 top-[513px] text-[22px] leading-7 text-[#a9acb0] [text-shadow:0_0_4px_#0b131b]">Dhak</span>
      <div className="absolute right-4 top-[15px] flex items-start gap-[15px]">
        <Legend />
        <div className="flex flex-col gap-[15px]">
          <MapButton label="Toggle legend" className="text-[#0aa5c9]">
            <path d="M0 2h4M8.500 2h19.500M8.500 8h14M0 14h4M8.500 14h19.500M8.500 20h14M0 26h4M8.500 26h19.500" strokeWidth="2.600" strokeLinecap="butt" />
          </MapButton>
          <MapButton label="Download output">
            <path d="M14 3v14M8.500 12l5.500 5.500 5.500-5.500M4 18v4.500c0 1.500 1 2.500 2.500 2.500h15c1.500 0 2.500-1 2.500-2.500V18" />
          </MapButton>
        </div>
      </div>
      <div className="absolute bottom-[47px] right-4 flex items-end gap-2">
        <div className="flex h-[63px] w-[385px] items-center rounded-lg border-2 border-[#303234] bg-[#1a1b1d] px-3.5 text-[22px] text-[#7b8186]">
          <span className="mr-auto">30.40895, 77.63166</span>
          <Icon className="mr-5 size-[22px]">
            <circle cx="12" cy="12" r="10.500" />
            <path d="m20 20 7 7" />
          </Icon>
          <span>13.0</span>
        </div>
        <div className="flex flex-col items-end gap-[15px]">
          <button aria-label="Reset north" className="flex size-[68px] flex-col items-center rounded-full border-2 border-[#303234] bg-[#1a1b1d] pt-2 text-[22px] font-semibold leading-6 text-[#e6e8e9] shadow-md">
            <svg viewBox="0 0 14 10" className="mb-1.5 h-2.5 w-3.5" aria-hidden="true">
              <path d="M7 0 14 10H0Z" fill="#f0492b" />
            </svg>
            N
          </button>
          <MapButton label="Zoom in"><path d="M14 4v20M4 14h20" /></MapButton>
          <MapButton label="Zoom out"><path d="M4 14h20" /></MapButton>
          <MapButton label="Layers">
            <path d="m14 1 11 6.500-11 6.500L3 7.500ZM3 13l11 6.500L25 13M3 19.500 14 26l11-6.500" strokeWidth="1.900" />
          </MapButton>
        </div>
      </div>
      <p className="absolute bottom-0 right-0.5 flex h-[35px] items-center gap-1.5 rounded-sm bg-[#8e9a9a] px-2 text-[18px] text-[#2f3636]">
        <a href="#mapbox">© Mapbox</a>
        <a href="#osm">© OpenStreetMap</a>
      </p>
    </div>
  );
}

const TABS = ["Overview", "Output", "Logs"];

export default function App() {
  return (
    <main className="relative min-h-screen bg-[#e9ebed] pb-24 pl-[93px] pr-[201px] pt-[74px] font-['Inter',sans-serif]">
      <header>
        <h1 className="text-[59px] font-semibold leading-[72px] text-[#788085]">Workflow- Land Use Land Cover Output</h1>
        <p className="mt-4 w-[2450px] text-[33px] leading-[53px] text-[#788085]">
          The Land Use Land Cover (LULC) model for satellite images enables users to classify and understand the types of land activities and covers depicted in the images, facilitating detailed analysis and insights into environmental changes or urban development.
        </p>
      </header>

      <div className="absolute right-[442px] top-[231px] z-10 w-[515px] text-[40px] font-semibold leading-[48px] text-[#6b7378]">
        <p>LULC Output Legend</p>
        <div className="mt-6 h-1 bg-[repeating-linear-gradient(90deg,#4d5154_0_6px,transparent_6px_13px)]" />
        <div className="ml-auto h-[248px] w-1 bg-[repeating-linear-gradient(180deg,#4d5154_0_6px,transparent_6px_13px)]" />
        <div className="-mr-1.5 ml-auto size-[17px] rounded-full bg-[#4d5154]" />
      </div>

      <div className="mt-[76px] flex">
        <div className="relative z-10 w-[503px] shrink-0 pt-[787px] text-[40px] font-semibold leading-[48px] text-[#6b7378]">
          <p>AOI- LULC Output</p>
          <div className="absolute left-0 mt-4 flex w-[1469px] items-center">
            <span className="h-1 grow bg-[repeating-linear-gradient(90deg,#4d5154_0_6px,transparent_6px_13px)]" />
            <span className="size-[17px] rounded-full bg-[#4d5154]" />
          </div>
        </div>

        <div className="flex min-w-0 grow overflow-hidden rounded-[26px] bg-[#111214] text-white shadow-[-32px_44px_64px_rgba(0,0,0,0.25)]">
          <Sidebar />
          <div className="min-w-0 grow">
            <div className="flex h-[72px] items-center border-b-2 border-[#27292b] bg-[#17181a] pl-4 pr-[13px]">
              <button aria-label="Back" className="text-[#e6e8e9]">
                <Icon className="size-[22px]"><path d="M18 3 8 14l10 11" strokeWidth="2.400" /></Icon>
              </button>
              <h2 className="ml-6 pb-1 text-[32px] font-semibold leading-10">Land Use Land Cover</h2>
              <div className="ml-auto mb-1.5 flex h-[60px] items-center rounded-lg border-2 border-[#2f3133] px-2 text-[23px] font-medium">
                <button className="h-[42px] px-5">Editor</button>
                <button className="h-[42px] rounded-md bg-[#04809c] px-[22px]">Jobs</button>
              </div>
            </div>
            <div className="flex h-[calc(100%-72px)]">
              <Jobs />
              <div className="min-w-0 grow">
                <div role="tablist" className="flex h-[98px] items-end gap-[27px] border-b-2 border-[#303233] pl-[26px] text-[26px]">
                  {TABS.map((tab) => (
                    <button
                      key={tab}
                      role="tab"
                      aria-selected={tab === "Output"}
                      className={
                        tab === "Output"
                          ? "h-[60px] border-b-[5px] border-[#00cdf7] pb-3.5 text-white"
                          : "h-[60px] border-b-[5px] border-transparent pb-3.5 text-[#7b8186]"
                      }
                    >
                      {tab}
                    </button>
                  ))}
                </div>
                <MapView />
              </div>
            </div>
          </div>
        </div>
      </div>
    </main>
  );
}
